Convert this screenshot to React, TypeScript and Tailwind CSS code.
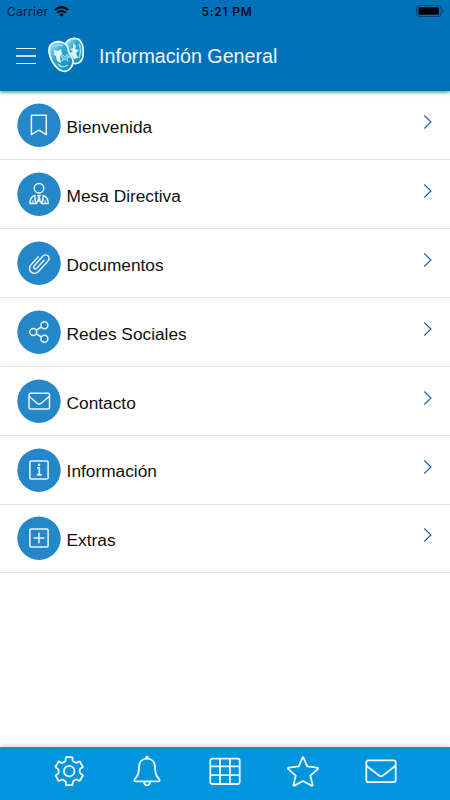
import type { ReactNode } from 'react';
import { clsx } from 'clsx';

interface MenuItem {
  id: string;
  label: string;
  icon: ReactNode;
}

const menuItems: MenuItem[] = [
  {
    id: 'bienvenida',
    label: 'Bienvenida',
    icon: <path d="M14.4 12.3H29.3V31.7L21.9 27.2L14.4 31.7Z" />,
  },
  {
    id: 'mesa',
    label: 'Mesa Directiva',
    icon: (
      <>
        <circle cx="22" cy="16.2" r="4.8" />
        <path d="M18 23.4C14.6 24.2 12.9 26.6 12.9 31.6H19.6C18 29 17.4 26.3 18 23.4ZM26 23.4C29.4 24.2 31.2 26.6 31.2 31.6H24.4C26 29 26.6 26.3 26 23.4Z" />
        <path d="M20.2 23H23.8L22.8 25L24 31.3L22 29L20 31.3L21.2 25Z" fill="currentColor" strokeWidth="0.5" />
        <path d="M16 28.2V31.2M28.1 28.2V31.2" strokeWidth="1" />
      </>
    ),
  },
  {
    id: 'documentos',
    label: 'Documentos',
    icon: (
      <path
        transform="rotate(42 22 22)"
        strokeWidth="1.4"
        d="M23.9 16V27.5A1.8 1.8 0 0 1 20.3 27.5V14.2A3.5 3.5 0 0 1 27.3 14.2V29A5 5 0 0 1 17.3 29V17.5"
      />
    ),
  },
  {
    id: 'redes',
    label: 'Redes Sociales',
    icon: (
      <>
        <circle cx="16.2" cy="22" r="3.5" />
        <circle cx="27.4" cy="15.2" r="3.5" />
        <circle cx="27.4" cy="28.8" r="3.5" />
        <path d="M19.2 20.2L24.4 17M19.2 23.8L24.4 27" />
      </>
    ),
  },
  {
    id: 'contacto',
    label: 'Contacto',
    icon: (
      <>
        <rect x="12" y="14.2" width="20.5" height="15.8" rx="1.5" />
        <path d="M12.3 17.5L20.2 24.3Q22.2 26 24.2 24.3L32.2 17.5" />
      </>
    ),
  },
  {
    id: 'informacion',
    label: 'Información',
    icon: (
      <>
        <rect x="12.9" y="13" width="18.2" height="18" rx="1.2" />
        <path d="M20 19.8H22.3V26.6M19.8 26.9H24.8" strokeWidth="1.7" />
        <circle cx="22" cy="16.7" r="1.3" fill="currentColor" stroke="none" />
      </>
    ),
  },
  {
    id: 'extras',
    label: 'Extras',
    icon: (
      <>
        <rect x="12.9" y="13" width="18.2" height="18" rx="1.2" />
        <path d="M22 16.5V27.3M16.6 22H27.4" />
      </>
    ),
  },
];

// One tooth and the valley next to it, repeated around the hub
const gearAngles = [0, 60, 120, 180, 240, 300];

const tabs: MenuItem[] = [
  {
    id: 'settings',
    label: 'Ajustes',
    icon: (
      <g transform="translate(17.2 16.2)" strokeLinecap="round">
        {gearAngles.map((angle) => (
          <path
            key={angle}
            transform={`rotate(${angle})`}
            d="M-2.7 -14H2.7Q3.3 -14 3.3 -13.4V-11.2Q3.4 -10.2 4.4 -9.6L5.6 -8.9Q6.8 -8.2 7.9 -8.7L9.6 -9.6Q10.3 -9.9 10.77 -9.34"
          />
        ))}
        <circle r="5.3" />
      </g>
    ),
  },
  {
    id: 'alerts',
    label: 'Avisos',
    icon: (
      <>
        <path d="M17 3.6C11.9 3.6 9 7.1 9 12.2C9 18 8 20.5 6 22.7L4.7 24.3Q3.8 26.3 5.6 26.3H28.4Q30.2 26.3 29.3 24.3L28 22.7C26 20.5 25 18 25 12.2C25 7.1 22.1 3.6 17 3.6Z" />
        <path d="M13.9 27Q14.5 30.3 17 30.3T20.1 27" />
        <circle cx="17" cy="2.6" r="1.8" fill="currentColor" stroke="none" />
      </>
    ),
  },
  {
    id: 'grid',
    label: 'Programa',
    icon: (
      <>
        <rect x="2.3" y="3.7" width="29.4" height="25.3" rx="2" />
        <path d="M12 4V29M21.9 4V29M2.5 11.4H31.5M2.5 20.2H31.5" />
      </>
    ),
  },
  {
    id: 'favorites',
    label: 'Favoritos',
    icon: (
      <path d="M16.4 2.8Q17 1.6 17.6 2.8L21.2 11.4L31.2 12.6Q32.6 13.1 31.5 14.3L24.3 20.7L26.6 30Q26.5 31.1 25.5 30.6L17 26L8.5 30.6Q7.5 31.1 7.4 30L9.7 20.7L2.5 14.3Q1.4 13.1 2.8 12.6L12.8 11.4Z" />
    ),
  },
  {
    id: 'mail',
    label: 'Mensajes',
    icon: (
      <>
        <rect x="2.3" y="5.3" width="29.4" height="21.8" rx="2" />
        <path d="M2.7 11L15 20.5Q17 22 19 20.5L31.3 11" />
      </>
    ),
  },
];

function StatusBar() {
  return (
    <div className="grid h-[22px] grid-cols-3 items-center pt-px font-[Inter,sans-serif] text-black">
      <div className="flex items-center pl-[7px] text-[12px] tracking-[0.3px]">
        <span className="text-black/85">Carrier</span>
        <svg className="ml-[6px] h-[11px] w-[15px]" viewBox="0 0 15 11" fill="none" stroke="currentColor" strokeWidth="2">
          <path d="M.8 4Q7.5-1.8 14.2 4" />
          <path d="M3.2 6.8Q7.5 3.2 11.8 6.8" />
          <path d="M7.5 10.7L5.2 8.4Q7.5 6.5 9.8 8.4Z" fill="currentColor" stroke="none" />
        </svg>
      </div>
      <span className="pl-[4px] text-center text-[12px] font-medium tracking-[0.8px]">5:21 PM</span>
      <div className="mb-px flex justify-end pr-[6px]">
        <svg className="h-[12px] w-[28px]" viewBox="0 0 28 12">
          <rect x=".5" y=".5" width="24.5" height="11" rx="3" fill="none" stroke="#003e70" />
          <rect x="2.5" y="2.3" width="20.5" height="7.4" rx="1" />
          <path d="M26.3 4V8Q27.8 7.5 27.8 6T26.3 4" fill="#00487e" />
        </svg>
      </div>
    </div>
  );
}

function Logo() {
  return (
    <svg className="h-[36px] w-[36px]" viewBox="0 0 36 36">
      <defs>
        <linearGradient id="lobe" x1="0" y1="0" x2="1" y2="1">
          <stop offset="0" stopColor="#b9f1fc" />
          <stop offset=".4" stopColor="#2ba8d6" />
          <stop offset="1" stopColor="#0c86c0" />
        </linearGradient>
      </defs>
      <g fill="url(#lobe)" stroke="#edfaff" strokeWidth="1.8">
        <path d="M18 6C20 2 25 .3 30 2C35 5 36 13 34.8 20C33 27 27 28 22 25L17 17Z" />
        <path d="M1.2 11C2 6 8 4 13 5C18 6.5 20.5 10 20.5 14C21 19 26 19 25 26C24 31 20 35.5 14.5 34C7 31.5 0 20 1.2 11Z" />
      </g>
      <path d="M6 13L10 14L13 12L14 17L12 19L13 26L9 24L8 19L6 18ZM25 6L28 9L27 12L31 13L28 16L30 21L26 22L24 18L21 17L25 14L22 12L25 11Z" fill="#dff5fa" />
      <path d="M6 10Q10 6.5 15 9M10 27Q14 32 20 28M31 7Q34 13 31 21" fill="none" stroke="#95e3f5" strokeWidth="1.5" />
      <path d="M12.5 19L15 18L17 20L19 17L20 19L22 20L19 21L20 24L17 22L14 24L15 21Z" fill="#64bddd" stroke="#d5f4fa" strokeWidth=".6" />
    </svg>
  );
}

function Header() {
  return (
    <header className="relative z-10 h-[91px] bg-[#0072bc] shadow-[0_1px_4px_rgba(0,0,0,0.6)]">
      <StatusBar />
      <div className="flex h-[69px] items-center text-[#f0f6fb]">
        <button className="mb-px ml-[16px] flex w-[20px] flex-col gap-[6px]" aria-label="Menú">
          <span className="h-px w-full bg-[#e8f2fa]" />
          <span className="h-[2px] w-full bg-[#c9dfef]" />
          <span className="h-px w-full bg-[#e8f2fa]" />
        </button>
        <div className="mb-[4px] ml-[12px]">
          <Logo />
        </div>
        <h1 className="mb-[2px] ml-[15px] text-[19.7px] leading-6">Información General</h1>
      </div>
    </header>
  );
}

function MenuRow({ item }: { item: MenuItem }) {
  return (
    <li className="flex h-[68.86px] items-center border-b border-[#e2e2e2] pl-[17px] pr-[17px]">
      <span className="flex size-[44px] items-center justify-center">
        <svg className="size-[44px] text-[#edf6fc]" viewBox="0 0 44 44" fill="none" stroke="currentColor" strokeWidth="1.5" strokeLinejoin="round">
          <circle cx="22" cy="22.2" r="21.7" fill="#2387c9" stroke="none" />
          {item.icon}
        </svg>
      </span>
      <span className="ml-[5.6px] flex-1 pt-[3.6px] text-[17.3px] leading-6 text-[#111]">{item.label}</span>
      <svg className="mb-[6px] h-[14px] w-[10px]" viewBox="0 0 10 14" fill="none" stroke="#155fb2" strokeWidth="1.1">
        <path d="M1.3 .5L8 7L1.3 13.5" />
      </svg>
    </li>
  );
}

function TabBar() {
  return (
    <nav className="relative h-[53px] bg-[#0095dc] px-[30px] shadow-[0_-1px_5px_rgba(0,0,0,0.2)]">
      <div className="grid h-[49px] grid-cols-5 items-center">
        {tabs.map((tab) => (
          <button
            key={tab.id}
            aria-label={tab.label}
            className={clsx('flex justify-center text-[#f3faff]', tab.id === 'mail' && 'pr-px')}
          >
            <svg className="size-[34px]" viewBox="0 0 34 34" fill="none" stroke="currentColor" strokeWidth="1.8" strokeLinejoin="round">
              {tab.icon}
            </svg>
          </button>
        ))}
      </div>
    </nav>
  );
}

export default function App() {
  return (
    <div className="flex h-[800px] w-[450px] flex-col overflow-hidden bg-white font-['Liberation_Sans',Arial,sans-serif]">
      <Header />
      <main className="flex-1 pt-[0.4px]">
        <ul>
          {menuItems.map((item) => (
            <MenuRow key={item.id} item={item} />
          ))}
        </ul>
      </main>
      <TabBar />
    </div>
  );
}
